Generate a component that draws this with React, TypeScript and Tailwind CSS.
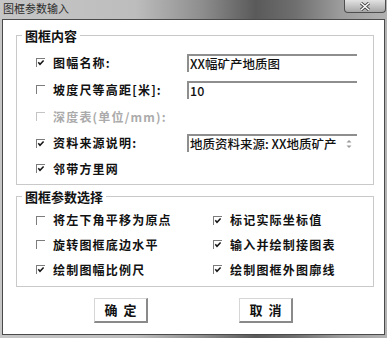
import React from "react";

const cjk = "font-['Noto_Sans_CJK_SC','Liberation_Sans',sans-serif]";

function Check({ checked, disabled }: { checked?: boolean; disabled?: boolean }) {
  return (
    <span
      className={`flex h-[9px] w-[9px] shrink-0 border-t border-l ${disabled ? "border-[#c4c4c4]" : "border-[#7c7c7c]"}`}
    >
      {checked && (
        <svg width="8" height="8" viewBox="0 0 8 8">
          <path d="M1.3 3.2 L3 5.3 L6.6 1.4" fill="none" stroke="#151515" strokeWidth="1.5" />
        </svg>
      )}
    </span>
  );
}

function Field({ value, spin }: { value: string; spin?: boolean }) {
  return (
    <div className="flex h-[18px] w-[170px] items-center border-t-2 border-l-2 border-t-[#8e8e8e] border-l-[#8e8e8e] bg-white pl-[1px]">
      <span className={`${cjk} whitespace-nowrap text-[12.5px] leading-[16px] font-medium text-[#111]`}>{value}</span>
      {spin && (
        <svg className="ml-auto mr-[5px]" width="6" height="10" viewBox="0 0 6 10">
          <path d="M3 1 L5.5 3.5 H0.5 Z" fill="#9a9a9a" />
          <path d="M3 9 L5.5 6.5 H0.5 Z" fill="#9a9a9a" />
        </svg>
      )}
    </div>
  );
}

function Row({
  label,
  checked,
  disabled,
  value,
  spin,
  h,
}: {
  label: string;
  checked?: boolean;
  disabled?: boolean;
  value?: string;
  spin?: boolean;
  h: string;
}) {
  return (
    <div className={`flex items-center ${h}`}>
      <div className="ml-[19px]">
        <Check checked={checked} disabled={disabled} />
      </div>
      <span
        className={`${cjk} ml-[8px] w-[134px] whitespace-nowrap text-[12px] leading-[16px] tracking-[1.2px] ${disabled ? "font-semibold text-[#ababab]" : "font-bold text-[#111]"}`}
      >
        {label}
      </span>
      {value !== undefined && <Field value={value} spin={spin} />}
    </div>
  );
}

function Opt({ label, checked, w }: { label: string; checked?: boolean; w?: string }) {
  return (
    <div className={`flex items-center ${w ?? ""}`}>
      <Check checked={checked} />
      <span className={`${cjk} ml-[8px] whitespace-nowrap text-[12px] leading-[16px] tracking-[1.2px] font-bold text-[#111]`}>
        {label}
      </span>
    </div>
  );
}

function Legend({ children }: { children: React.ReactNode }) {
  return (
    <div className={`${cjk} -mt-[9px] ml-[5px] h-[17px] w-fit bg-white px-[3px] text-[13px] leading-[17px] font-bold text-[#111]`}>
      {children}
    </div>
  );
}

function Button({ children }: { children: React.ReactNode }) {
  return (
    <button
      className={`${cjk} flex h-[25px] w-[54px] items-center justify-center border-t border-l border-r-2 border-b-2 border-t-[#d6d6d6] border-l-[#d6d6d6] border-r-[#8a8a8a] border-b-[#8a8a8a] bg-white text-[13px] font-bold tracking-[6px] text-[#111]`}
    >
      <span className="pl-[6px]">{children}</span>
    </button>
  );
}

export default function App() {
  return (
    <div className="flex h-[338px] w-[387px] flex-col bg-[linear-gradient(90deg,#c6c6c6_0%,#bdbdbd_35%,#8e8e8e_52%,#5a5a5a_66%,#6e6e6e_76%,#9c9c9c_88%,#b2b2b2_100%)]">
      {/* title bar */}
      <div className="flex h-[19px] items-start">
        <span className={`${cjk} pl-[3px] pt-[2px] text-[11px] leading-[13px] text-[#2c2c2c]`}>图框参数输入</span>
        <div className="ml-auto mr-[1px] flex h-[13px] w-[42px] items-center justify-center rounded-b-[4px] border border-t-0 border-[#4e4e4e] bg-[linear-gradient(180deg,#e2e2e2,#a6a6a6)]">
          <svg width="12" height="9" viewBox="0 0 12 9">
            <path d="M2 1 L10 8 M10 1 L2 8" stroke="#3a3a3a" strokeWidth="3" />
            <path d="M2 1 L10 8 M10 1 L2 8" stroke="#ffffff" strokeWidth="1.5" />
          </svg>
        </div>
      </div>

      {/* client area */}
      <div className="mx-[2px] flex h-[316px] flex-col border border-[#4a4a4a] bg-white">
        <div className="ml-[13px] mt-[15px] flex h-[150px] w-[358px] flex-col border border-[#c9c9c9]">
          <Legend>图框内容</Legend>
          <div className="mt-[5px] flex flex-col">
            <Row h="h-[27px]" label="图幅名称:" checked value="XX幅矿产地质图" />
            <Row h="h-[27px]" label="坡度尺等高距[米]:" value="10" />
            <Row h="h-[27px]" label="深度表(单位/mm):" disabled />
            <Row h="h-[26px]" label="资料来源说明:" checked value="地质资料来源: XX地质矿产" spin />
            <Row h="h-[25px]" label="邻带方里网" checked />
          </div>
        </div>

        <div className="ml-[13px] mt-[11px] flex h-[91px] w-[358px] flex-col border border-[#c9c9c9]">
          <Legend>图框参数选择</Legend>
          <div className="mt-[3px] flex flex-col pl-[19px]">
            <div className="flex h-[24px] items-center">
              <Opt w="w-[177px]" label="将左下角平移为原点" />
              <Opt label="标记实际坐标值" checked />
            </div>
            <div className="flex h-[25px] items-center">
              <Opt w="w-[177px]" label="旋转图框底边水平" />
              <Opt label="输入并绘制接图表" checked />
            </div>
            <div className="flex h-[25px] items-center">
              <Opt w="w-[177px]" label="绘制图幅比例尺" checked />
              <Opt label="绘制图框外图廓线" checked />
            </div>
          </div>
        </div>

        <div className="ml-[91px] mt-[11px] flex gap-[91px]">
          <Button>确定</Button>
          <Button>取消</Button>
        </div>
      </div>
    </div>
  );
}
